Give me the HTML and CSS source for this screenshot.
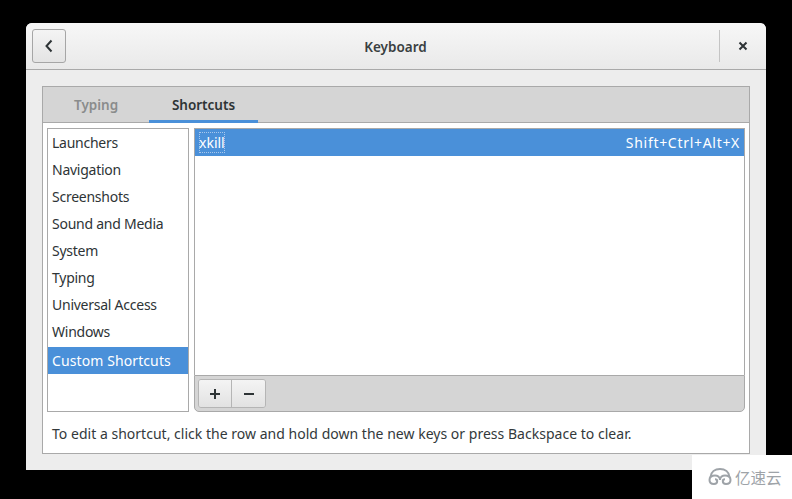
FILE: index.html
```html
<!DOCTYPE html>
<html>
<head>
	<meta charset="utf-8" />
	<title>Keyboard</title>
	<link rel="stylesheet" href="styles.css">
</head>
<body>
	<div class="window">
		<div class="header">
			<button class="back">
				<svg width="10" height="14" viewBox="0 0 10 14"><path d="M7.5 1.5 L2.5 7 L7.5 12.5" fill="none" stroke="#2e3436" stroke-width="2"/></svg>
			</button>
			<div class="title">Keyboard</div>
			<div class="sep"></div>
			<div class="close">
				<svg width="10" height="10" viewBox="0 0 10 10"><path d="M1.5 1.5 L8.5 8.5 M8.5 1.5 L1.5 8.5" fill="none" stroke="#2e3436" stroke-width="2"/></svg>
			</div>
		</div>
		<div class="content">
			<div class="notebook">
				<div class="tabs">
					<div class="tab">Typing</div>
					<div class="tab active">Shortcuts</div>
				</div>
				<div class="page">
					<div class="panes">
						<div class="sections">
							<div class="row">Launchers</div>
							<div class="row">Navigation</div>
							<div class="row">Screenshots</div>
							<div class="row">Sound and Media</div>
							<div class="row">System</div>
							<div class="row">Typing</div>
							<div class="row">Universal Access</div>
							<div class="row">Windows</div>
							<div class="row selected custom">Custom Shortcuts</div>
						</div>
						<div class="right">
							<div class="shortcuts">
								<div class="row selected">
									<span class="focus">xkill</span>
									<span class="accel">Shift+Ctrl+Alt+X</span>
								</div>
							</div>
							<div class="toolbar">
								<div class="btns">
									<div class="btn">
										<svg width="12" height="12" viewBox="0 0 12 12"><path d="M6 1 V11 M1 6 H11" stroke="#2e3436" stroke-width="2"/></svg>
									</div>
									<div class="btn">
										<svg width="12" height="12" viewBox="0 0 12 12"><path d="M1 6 H11" stroke="#2e3436" stroke-width="2"/></svg>
									</div>
								</div>
							</div>
						</div>
					</div>
					<p class="hint">To edit a shortcut, click the row and hold down the new keys or press Backspace to clear.</p>
				</div>
			</div>
		</div>
	</div>

	<div class="mark">
		<svg width="24" height="17" viewBox="0 0 24 17">
			<g fill="none" stroke="#9ea3a8" stroke-width="2">
				<path d="M2.5 9 C3 4 7 1 12 1 C17 1 21 4 21.5 9"/>
				<path d="M12 12 C12 9 9.5 7.5 7 7.5 C3.5 7.5 1.5 9.5 1.5 12 C1.5 14.5 3.5 16 6 16 C8 16 9.2 15 9.2 13 C9.2 12 8.2 11.3 7 11.3"/>
				<path d="M12 12 C12 9 14.5 7.5 17 7.5 C20.5 7.5 22.5 9.5 22.5 12 C22.5 14.5 20.5 16 18 16 C16 16 14.8 15 14.8 13 C14.8 12 15.8 11.3 17 11.3"/>
			</g>
		</svg>
		<span>亿速云</span>
	</div>
</body>
</html>
```

FILE: styles.css
```css
* { margin:0; padding:0; box-sizing:border-box; }
html, body { height:100%; overflow:hidden; }
body { background:#000; padding:23px 26px 0; font-family:"Noto Sans", sans-serif; font-size:14px; color:#2e3436; position:relative; }

.window { width:740px; height:447px; background:#ededed; border-radius:6px 6px 0 0; overflow:hidden; }

.header { height:47px; display:flex; align-items:center; padding:0 0 0 6px; background:linear-gradient(#f7f7f7, #e9e9e9); border-bottom:1px solid #a9a9a9; }
.back { width:34px; height:34px; display:flex; align-items:center; justify-content:center; background:linear-gradient(#f4f4f4, #e4e4e4); border:1px solid #a6a6a6; border-radius:3px; }
.title { flex:1; text-align:center; font-weight:600; font-size:13.5px; color:#3a3f41; padding:2px 0 0 6px; }
.sep { width:1px; height:32px; background:#c4c4c4; }
.close { width:46px; display:flex; justify-content:center; }

.content { padding:16px 16px 0; }
.notebook { height:368px; border:1px solid #a9a9a9; background:#fff; }
.tabs { height:36px; display:flex; padding-left:24px; background:#d5d5d5; border-bottom:1px solid #a9a9a9; font-size:13.5px; font-weight:600; }
.tab { padding:0 0 0 7px; width:82px; line-height:36px; color:#8a8c8c; }
.tab.active { width:109px; padding:0; text-align:center; color:#2e3436; height:36px; border-bottom:3px solid #4a90d9; }

.page { padding:5px 4px 0; }
.panes { display:flex; gap:5px; height:284px; }
.sections { width:142px; border:1px solid #a9a9a9; background:#fff; letter-spacing:-0.25px; }
.row { height:27px; line-height:28px; padding:0 4px; white-space:nowrap; }
.row.selected { background:#4a90d9; color:#fff; }
.row.custom { margin-top:2px; letter-spacing:0.1px; }

.right { flex:1; display:flex; flex-direction:column; }
.shortcuts { flex:1; border:1px solid #a9a9a9; border-bottom:0; background:#fff; }
.shortcuts .row { display:flex; justify-content:space-between; }
.focus { outline:1px dotted #a9c8ec; outline-offset:-1px; height:21px; line-height:22px; margin-top:3px; }
.accel { letter-spacing:0.7px; }

.toolbar { height:37px; padding:3px; background:#d5d5d5; border:1px solid #a9a9a9; border-radius:0 0 5px 5px; }
.btns { display:flex; width:68px; height:29px; border:1px solid #b5b5b5; border-radius:3px; overflow:hidden; }
.btn { width:32px; display:flex; align-items:center; justify-content:center; background:linear-gradient(#f4f4f4, #e2e2e2); }
.btn + .btn { flex:1; border-left:1px solid #b5b5b5; }

.hint { padding:13px 5px 0; line-height:18px; color:#33393b; letter-spacing:0.02px; }

.mark { position:absolute; left:692px; top:455px; width:100px; height:44px; background:#fff; display:flex; align-items:center; gap:3px; padding:0 0 1px 16px; color:#9ea3a8; font-family:"Noto Sans CJK SC", sans-serif; font-size:15.5px; }
```
